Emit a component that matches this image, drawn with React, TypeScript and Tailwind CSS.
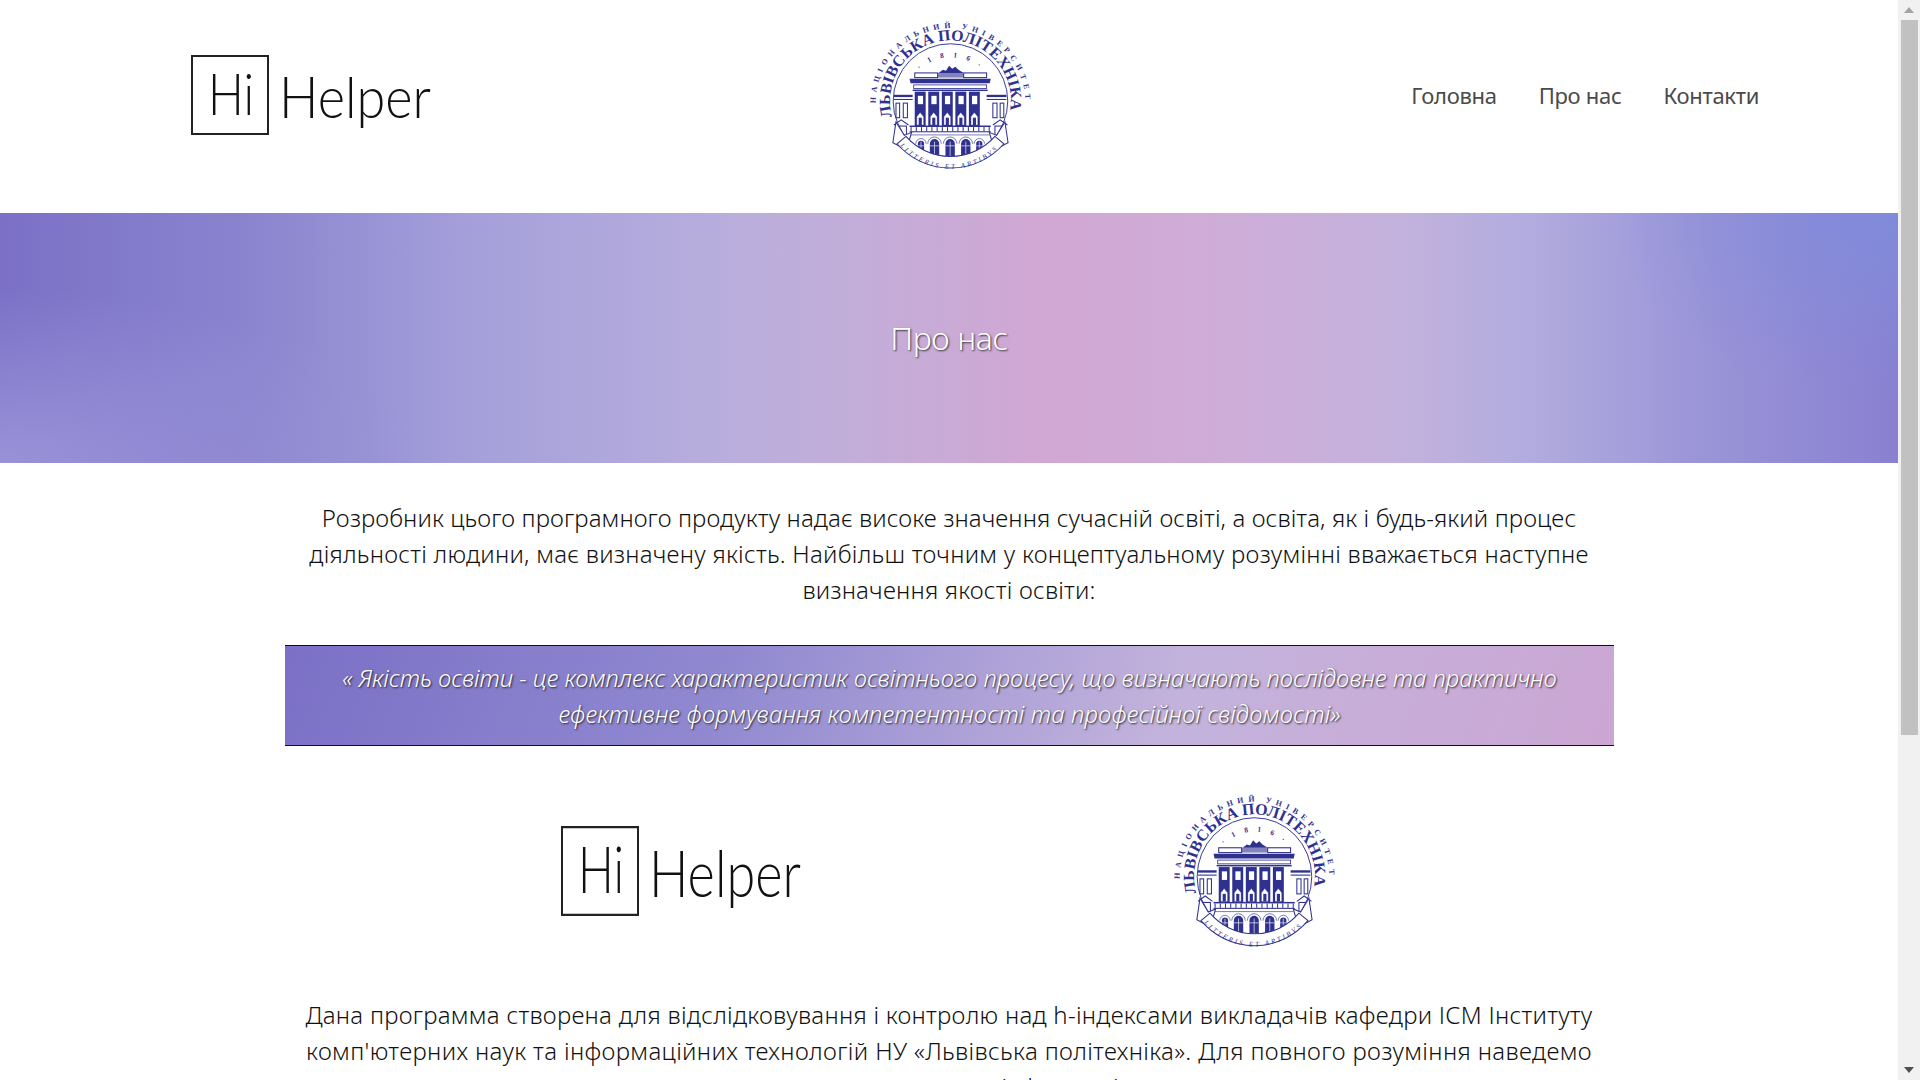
import { useId } from "react";

const BLUE = "#2f318f";

function HiHelper({ height, className }: { height: number; className?: string }) {
  return (
    <svg width={240} height={height} viewBox="0 0 240 80" preserveAspectRatio="none" className={className}>
      <rect x="1" y="1" width="76" height="78" fill="none" stroke="#222" strokeWidth="2" />
      <text x="17" y="60" fontFamily="Lato" fontWeight="300" fontSize="58" fill="#111" textLength="46" lengthAdjust="spacingAndGlyphs">Hi</text>
      <text x="88" y="63" fontFamily="Lato" fontWeight="300" fontSize="58" fill="#111" textLength="152" lengthAdjust="spacingAndGlyphs">Helper</text>
    </svg>
  );
}

function Emblem({ height }: { height: number }) {
  const id = useId().replace(/[^a-zA-Z0-9]/g, "");
  const cols = [65, 78, 91, 104, 117];
  const arches = [71, 84, 99, 114, 127];
  const balusters = Array.from({ length: 16 }, (_, i) => 61 + i * 5);
  return (
    <svg width={200} height={height} viewBox="1.9 2.6 192 163.2" preserveAspectRatio="none">
      <defs>
        <path id={`${id}o`} d="M 27.3 92 A 72 72 0 0 1 171.3 92" />
        <path id={`${id}m`} d="M 43.3 105 A 58 58 0 1 1 155.3 105" />
        <path id={`${id}y`} d="M 69.8 60 A 42 42 0 0 1 128.8 60" />
        <path id={`${id}r`} d="M 51 133 A 64 64 0 0 0 147.6 133" />
      </defs>
      <text fontFamily="Liberation Serif" fontWeight="700" fontSize="7.5" fill={BLUE}>
        <textPath href={`#${id}o`} textLength="222">НАЦІОНАЛЬНИЙ УНІВЕРСИТЕТ</textPath>
      </text>
      <text fontFamily="Liberation Serif" fontWeight="700" fontSize="15" fill={BLUE}>
        <textPath href={`#${id}m`} textLength="206" lengthAdjust="spacingAndGlyphs">ЛЬВІВСЬКА ПОЛІТЕХНІКА</textPath>
      </text>
      <text fontFamily="Liberation Serif" fontWeight="700" fontSize="7" fill={BLUE}>
        <textPath href={`#${id}y`} textLength="62">· 1 8 1 6 ·</textPath>
      </text>
      <circle cx="99.3" cy="90" r="55" fill="none" stroke={BLUE} strokeWidth="0.9" />
      {/* wings */}
      <rect x="45" y="84" width="108" height="2.2" fill={BLUE} />
      <rect x="45" y="88" width="108" height="1" fill={BLUE} />
      <g fill="none" stroke={BLUE} strokeWidth="1">
        <rect x="47" y="92" width="3.5" height="14" />
        <rect x="54" y="92" width="4" height="14" />
        <rect x="140" y="92" width="4" height="14" />
        <rect x="147" y="92" width="3.5" height="14" />
        <path d="M 45 113 L 52 108 L 59 113 M 140 113 L 147 108 L 154 113" />
        <rect x="47" y="114" width="10" height="10" />
        <rect x="142" y="114" width="10" height="10" />
      </g>
      {/* roof group */}
      <path d="M 88 63 L 92 60 L 95 61 L 98 56 L 101 59 L 104 57 L 107 60 L 112 63 Z" fill={BLUE} />
      <rect x="65" y="63" width="22" height="4.5" fill="none" stroke={BLUE} strokeWidth="1" />
      <rect x="112" y="63" width="22" height="4.5" fill="none" stroke={BLUE} strokeWidth="1" />
      <rect x="87" y="63" width="25" height="4.5" fill={BLUE} opacity="0.6" />
      <path d="M 60 68.5 L 138 68.5 L 137 73 L 61 73 Z" fill={BLUE} />
      <rect x="64" y="74.5" width="70" height="3.5" fill="none" stroke={BLUE} strokeWidth="0.8" />
      <rect x="63" y="79" width="72" height="1.4" fill={BLUE} />
      {/* colonnade */}
      <rect x="63" y="81" width="71" height="33" fill="#fff" />
      {cols.map((x) => (
        <g key={x}>
          <rect x={x} y="81" width="10.5" height="33" fill={BLUE} />
          <rect x={x + 3} y="85" width="5" height="8" fill="#fff" />
          <path d={`M ${x + 2} 105 L ${x + 5.2} 101 L ${x + 8.5} 105 L ${x + 8.5} 113 L ${x + 2} 113 Z`} fill="#fff" stroke={BLUE} strokeWidth="0.3" />
          <rect x={x + 3.8} y="106" width="3" height="7" fill={BLUE} />
        </g>
      ))}
      {/* balcony */}
      <rect x="60" y="113.5" width="78" height="1.4" fill={BLUE} />
      {balusters.map((x) => (
        <rect key={x} x={x} y="115" width="1" height="4" fill={BLUE} />
      ))}
      <rect x="60" y="119" width="78" height="1" fill={BLUE} />
      {/* ground floor */}
      <rect x="61" y="122" width="76" height="1" fill={BLUE} opacity="0.6" />
      {arches.map((cx, i) => {
        const w = i === 0 || i === 4 ? 6 : 9;
        return (
          <g key={cx}>
            <path d={`M ${cx - w / 2} 143 V 131 A ${w / 2} ${w / 2} 0 0 1 ${cx + w / 2} 131 V 143 Z`} fill={BLUE} />
            <path d={`M ${cx} 129 V 143 M ${cx - w / 2} 133 H ${cx + w / 2}`} stroke="#fff" strokeWidth="0.6" />
            <path d={`M ${cx - w / 2 - 2} 131 A ${w / 2 + 2} ${w / 2 + 2} 0 0 1 ${cx + w / 2 + 2} 131`} fill="none" stroke={BLUE} strokeWidth="0.6" />
          </g>
        );
      })}
      {/* ribbon */}
      <path d="M 44 130 L 47 110 L 55 123 L 62 120 L 57 137 Z" fill="#fff" stroke={BLUE} strokeWidth="1" />
      <path d="M 154.6 130 L 151.6 110 L 143.6 123 L 136.6 120 L 141.6 137 Z" fill="#fff" stroke={BLUE} strokeWidth="1" />
      <path d="M 48 131 A 68 68 0 0 0 150.6 131 L 142 124 A 57 57 0 0 1 56.6 124 Z" fill="#fff" stroke={BLUE} strokeWidth="1" />
      <text fontFamily="Liberation Serif" fontStyle="italic" fontSize="6.5" fill={BLUE}>
        <textPath href={`#${id}r`} textLength="104">LITTERIS ET ARTIBVS</textPath>
      </text>
    </svg>
  );
}

const bodyFont = "font-['Noto_Sans','Open_Sans',sans-serif] font-light text-[24px] leading-[36px] text-[#111] text-center";

export default function App() {
  return (
    <div className="flex h-screen w-full overflow-hidden bg-white">
      <main className="flex-1 min-w-0 h-full overflow-hidden">
        <header className="h-[213px] pt-[10px]">
          <div className="grid grid-cols-3 items-center h-[170px]">
            <div className="pl-[191px]"><HiHelper height={80} /></div>
            <div className="flex justify-center"><Emblem height={170} /></div>
            <nav className="flex justify-end gap-[42px] pr-[139px] pt-[1px] text-[22px] text-[#4a4a4a] font-['Noto_Sans',sans-serif] tracking-[-0.3px]">
              <a>Головна</a>
              <a>Про нас</a>
              <a>Контакти</a>
            </nav>
          </div>
        </header>

        <section className="h-[250px] flex items-center justify-center bg-[radial-gradient(ellipse_15%_75%_at_100%_0%,#7f8cdcd8,#7f8cdc00),radial-gradient(ellipse_22%_70%_at_0%_100%,#9a92d8,#9a92d800),linear-gradient(to_right,#7b70c6_0%,#8a84cf_13%,#a5a0da_25%,#b8aedd_38%,#c3add9_45%,#d1a7d3_55%,#cfacd8_64%,#c4b2dc_73%,#b3addf_80%,#9a94d8_90%,#8980d0_100%)]">
          <h1 className="text-[32px] font-light text-white font-['Noto_Sans',sans-serif] [text-shadow:1px_1px_2px_#333] tracking-[-0.4px] leading-[36px]">Про нас</h1>
        </section>

        <p className={`${bodyFont} mt-[37px]`}>
          <span className="block tracking-[0.1px]">Розробник цього програмного продукту надає високе значення сучасній освіті, а освіта, як і будь-який процес</span>
          <span className="block tracking-[0.25px]">діяльності людини, має визначену якість. Найбільш точним у концептуальному розумінні вважається наступне</span>
          <span className="block tracking-[0.2px]">визначення якості освіти:</span>
        </p>

        <blockquote className="mt-[37px] ml-[285px] w-[1329px] h-[101px] py-[14px] border-y border-[#111] bg-[linear-gradient(110deg,#7b70c6,#9089d0_33%,#c3b3dc_67%,#cca6d3)] text-center text-white italic font-light text-[24px] leading-[36px] font-['Noto_Sans',sans-serif] [text-shadow:1px_1px_2px_#222]">
          <span className="block tracking-[-0.06px]">« Якість освіти - це комплекс характеристик освітнього процесу, що визначають послідовне та практично</span>
          <span className="block tracking-[0.09px]">ефективне формування компетентності та професійної свідомості»</span>
        </blockquote>

        <div className="mt-[37px] flex items-center h-[175px] pl-[561px] gap-[352px]">
          <HiHelper height={90} />
          <Emblem height={175} />
        </div>

        <p className={`${bodyFont} mt-[39px]`}>
          <span className="block tracking-[0.27px]">Дана программа створена для відслідковування і контролю над h-індексами викладачів кафедри ІСМ Інституту</span>
          <span className="block tracking-[0.36px]">комп'ютерних наук та інформаційних технологій НУ «Львівська політехніка». Для повного розуміння наведемо</span>
          <span className="block tracking-[0.28px]">наступну теоретичну інформацію:</span>
        </p>
      </main>

      <aside className="w-[22px] h-full flex flex-col items-center bg-[#f1f1f1]">
        <div className="h-[20px] w-full flex items-center justify-center">
          <svg width="10" height="6" viewBox="0 0 10 6"><path d="M5 0 L10 6 L0 6 Z" fill="#a3a3a3" /></svg>
        </div>
        <div className="w-[17px] h-[715px] bg-[#c1c1c1]" />
        <div className="flex-1" />
        <div className="h-[20px] w-full flex items-center justify-center">
          <svg width="10" height="6" viewBox="0 0 10 6"><path d="M0 0 L10 0 L5 6 Z" fill="#505050" /></svg>
        </div>
      </aside>
    </div>
  );
}
